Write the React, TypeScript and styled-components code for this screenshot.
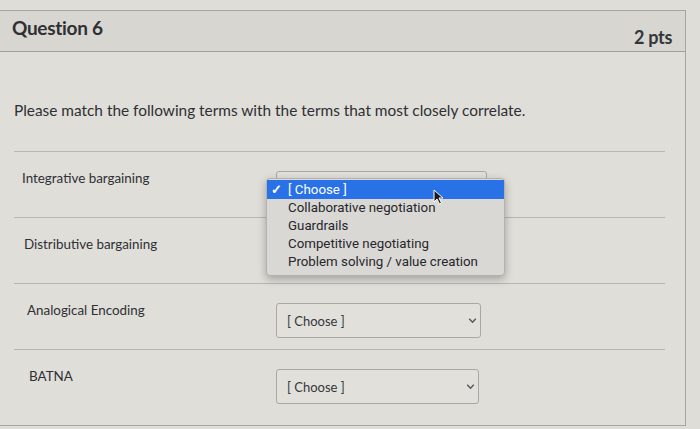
import React from "react";
import styled, { createGlobalStyle } from "styled-components";

const Global = createGlobalStyle`
  html, body { margin: 0; padding: 0; }
  body {
    background: #dfddd8;
    font-family: Lato, "Open Sans", sans-serif;
    color: #2f3236;
    width: 700px;
    height: 429px;
    overflow: hidden;
  }
`;

const Card = styled.div`
  margin-top: 10px;
  width: 686px;
  height: 416px;
  box-sizing: border-box;
  border: 1px solid #a7a6a2;
  border-left: none;
  background: #e0ded9;
`;

const Header = styled.div`
  height: 41px;
  box-sizing: border-box;
  display: flex;
  justify-content: space-between;
  align-items: center;
  padding: 0 13px 0 12px;
  background: #d8d6d1;
  border-bottom: 1px solid #a2a19d;
`;

const Title = styled.h2`
  margin: 0;
  font-size: 19px;
  font-weight: 700;
  letter-spacing: -0.3px;
  color: #2e3034;
  transform: translateY(-4px);
`;

const Points = styled.span`
  font-size: 18px;
  font-weight: 700;
  letter-spacing: -0.3px;
  color: #33363a;
  transform: translateY(6px);
`;

const Body = styled.div`
  padding: 0 20px 0 14px;
`;

const Prompt = styled.p`
  margin: 0;
  padding: 49px 0 32px 0;
  font-size: 15.4px;
  line-height: 18px;
  color: #2e3034;
  border-bottom: 1px solid #b9b7b2;
`;

const Row = styled.div<{ $shift: number; $last?: boolean }>`
  position: relative;
  height: 66px;
  box-sizing: border-box;
  display: flex;
  align-items: flex-start;
  padding-top: 18px;
  padding-left: ${(p) => p.$shift}px;
  border-bottom: ${(p) => (p.$last ? "none" : "1px solid #b7b5b0")};
`;

const Label = styled.div<{ $shift: number }>`
  width: ${(p) => 262 - p.$shift}px;
  font-size: 13.4px;
  line-height: 16px;
  color: #2e3034;
`;

const SelectBox = styled.div<{ $w: number }>`
  position: relative;
  margin-top: 1px;
  width: ${(p) => p.$w}px;
  height: 35px;
  box-sizing: border-box;
  border: 1px solid #a9a8a4;
  border-radius: 3px;
  background: #e2e0db;
  display: flex;
  align-items: center;
  justify-content: space-between;
  padding: 0 2px 0 10px;
  font-size: 13px;
  color: #34373b;
`;

const Chevron = styled.svg`
  width: 11px;
  height: 11px;
`;

const Menu = styled.ul`
  position: absolute;
  left: -11px;
  top: 6px;
  width: 237px;
  margin: 0;
  padding: 1px 0 4px 0;
  list-style: none;
  background: #d9d8d5;
  border: 1px solid #b3b2ae;
  border-radius: 4px;
  box-shadow: 0 3px 8px rgba(0, 0, 0, 0.28);
  font-family: Roboto, "Liberation Sans", sans-serif;
  font-size: 13.3px;
  z-index: 2;
`;

const Item = styled.li<{ $active?: boolean }>`
  height: ${(p) => (p.$active ? 19 : 18)}px;
  line-height: ${(p) => (p.$active ? 19 : 18)}px;
  display: flex;
  align-items: center;
  padding-left: 3px;
  background: ${(p) => (p.$active ? "#2871e6" : "transparent")};
  color: ${(p) => (p.$active ? "#ffffff" : "#26272a")};
  white-space: nowrap;
  overflow: hidden;
`;

const Check = styled.span`
  width: 17px;
  font-size: 13px;
  font-weight: 700;
  text-align: left;
  padding-left: 1px;
`;

const Cursor = styled.svg`
  position: absolute;
  left: 166px;
  top: 10px;
  width: 11px;
  height: 16px;
`;

const rows = [
  { label: "Integrative bargaining", shift: 8, w: 211, open: true },
  { label: "Distributive bargaining", shift: 10, w: 208 },
  { label: "Analogical Encoding", shift: 13, w: 205 },
  { label: "BATNA", shift: 15, w: 203 },
];

const options = [
  "Collaborative negotiation",
  "Guardrails",
  "Competitive negotiating",
  "Problem solving / value creation",
];

const ChevronIcon = () => (
  <Chevron viewBox="0 0 10 10">
    <path d="M2 3.5 L5 6.5 L8 3.5" fill="none" stroke="#55575b" strokeWidth="1.3" />
  </Chevron>
);

export default function App() {
  return (
    <>
      <Global />
      <Card>
        <Header>
          <Title>Question 6</Title>
          <Points>2 pts</Points>
        </Header>
        <Body>
          <Prompt>Please match the following terms with the terms that most closely correlate.</Prompt>
          {rows.map((r, i) => (
            <Row key={r.label} $shift={r.shift} $last={i === rows.length - 1}>
              <Label $shift={r.shift}>{r.label}</Label>
              {r.open ? (
                <SelectBox $w={r.w}>
                  <span />
                  <Menu>
                    <Item $active>
                      <Check>✓</Check>[ Choose ]
                    </Item>
                    {options.map((o) => (
                      <Item key={o}>
                        <Check />
                        {o}
                      </Item>
                    ))}
                    <Cursor viewBox="0 0 11 16">
                      <path
                        d="M1 1 L1 13 L4 10 L6.5 15 L8.5 14 L6 9 L10 9 Z"
                        fill="#1b1b1b"
                        stroke="#ffffff"
                        strokeWidth="1"
                      />
                    </Cursor>
                  </Menu>
                </SelectBox>
              ) : (
                <SelectBox $w={r.w}>
                  <span>[ Choose ]</span>
                  <ChevronIcon />
                </SelectBox>
              )}
            </Row>
          ))}
        </Body>
      </Card>
    </>
  );
}
